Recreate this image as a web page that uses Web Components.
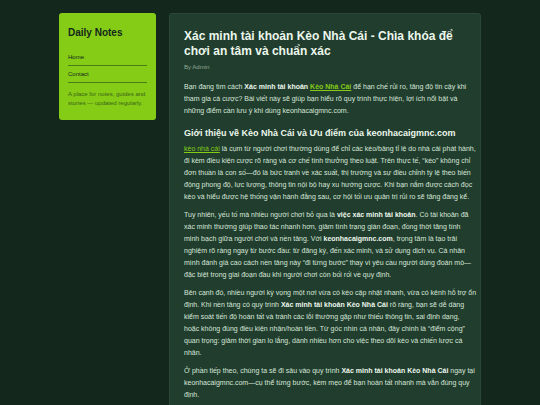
<!DOCTYPE html>
<html lang="vi">
<head>
<meta charset="utf-8">
<meta name="viewport" content="width=device-width, initial-scale=1">
<title>Daily Notes</title>
<style>
html { background: #14271d; }
body { margin: 0; font-family: "Liberation Sans", Arial, sans-serif; font-size: 7px; line-height: 12px; color: #d6e6d8; }
</style>
</head>
<body>
<notes-layout>
  <notes-sidebar slot="side" heading="Daily Notes">
    <nav-item href="#home">Home</nav-item>
    <nav-item href="#contact">Contact</nav-item>
    <span slot="about">A place for notes, guides and<br>stories — updated regularly.</span>
  </notes-sidebar>
  <notes-article>
    <span slot="title">Xác minh tài khoản Kèo Nhà Cái - Chìa khóa để<br>chơi an tâm và chuẩn xác</span>
    <span slot="author">By Admin</span>
    <article-text>Bạn đang tìm cách <b>Xác minh tài khoản <text-link href="#keo">Kèo Nhà Cái</text-link></b> để hạn chế rủi ro, tăng độ tin cậy khi<br>tham gia cá cược? Bài viết này sẽ giúp bạn hiểu rõ quy trình thực hiện, lợi ích nổi bật và<br>những điểm cần lưu ý khi dùng keonhacaigmnc.com.</article-text>
    <article-heading>Giới thiệu về Kèo Nhà Cái và Ưu điểm của keonhacaigmnc.com</article-heading>
    <article-text><text-link href="#keo">kèo nhà cái</text-link> là cụm từ người chơi thường dùng để chỉ các kèo/bảng tỉ lệ do nhà cái phát hành,<br>đi kèm điều kiện cược rõ ràng và cơ chế tính thưởng theo luật. Trên thực tế, “kèo” không chỉ<br>đơn thuần là con số—đó là bức tranh về xác suất, thị trường và sự điều chỉnh tỷ lệ theo biến<br>động phong độ, lực lượng, thông tin nội bộ hay xu hướng cược. Khi bạn nắm được cách đọc<br>kèo và hiểu được hệ thống vận hành đằng sau, cơ hội tối ưu quản trị rủi ro sẽ tăng đáng kể.</article-text>
    <article-text>Tuy nhiên, yếu tố mà nhiều người chơi bỏ qua là <b>việc xác minh tài khoản</b>. Có tài khoản đã<br>xác minh thường giúp thao tác nhanh hơn, giảm tình trạng gián đoạn, đồng thời tăng tính<br>minh bạch giữa người chơi và nền tảng. Với <b>keonhacaigmnc.com</b>, trọng tâm là tạo trải<br>nghiệm rõ ràng ngay từ bước đầu: từ đăng ký, đến xác minh, và sử dụng dịch vụ. Cá nhân<br>mình đánh giá cao cách nền tảng này “đi từng bước” thay vì yêu cầu người dùng đoán mò—<br>đặc biệt trong giai đoạn đầu khi người chơi còn bối rối về quy định.</article-text>
    <article-text>Bên cạnh đó, nhiều người kỳ vọng một nơi vừa có kèo cập nhật nhanh, vừa có kênh hỗ trợ ổn<br>định. Khi nền tảng có quy trình <b>Xác minh tài khoản Kèo Nhà Cái</b> rõ ràng, bạn sẽ dễ dàng<br>kiểm soát tiến độ hoàn tất và tránh các lỗi thường gặp như thiếu thông tin, sai định dạng,<br>hoặc không đúng điều kiện nhận/hoàn tiền. Từ góc nhìn cá nhân, đây chính là “điểm cộng”<br>quan trọng: giảm thời gian lo lắng, dành nhiều hơn cho việc theo dõi kèo và chiến lược cá<br>nhân.</article-text>
    <article-text>Ở phần tiếp theo, chúng ta sẽ đi sâu vào quy trình <b>Xác minh tài khoản Kèo Nhà Cái</b> ngay tại<br>keonhacaigmnc.com—cụ thể từng bước, kèm mẹo để bạn hoàn tất nhanh mà vẫn đúng quy<br>định.</article-text>
  </notes-article>
</notes-layout>
<script>
function define(name, html, setup) {
  const template = document.createElement('template');
  template.innerHTML = html;
  customElements.define(name, class extends HTMLElement {
    constructor() {
      super();
      this.attachShadow({ mode: 'open' }).append(template.content.cloneNode(true));
    }
    connectedCallback() { if (setup) setup(this, this.shadowRoot); }
  });
}

define('notes-layout', `
<style>
:host { display: grid; grid-template-columns: 97px minmax(0, 1fr); gap: 13px; align-items: start;
  max-width: 422px; margin: 0 auto; padding: 13px 16px 0; }
</style>
<slot name="side"></slot><slot></slot>`);

define('notes-sidebar', `
<style>
:host { display: block; background: #84cc16; color: #14271d; border-radius: 3px; padding: 13px 9px 12px; }
h2 { margin: 0 0 9px; font-size: 10px; line-height: 14px; }
nav { display: block; }
p { margin: 7px 0 0; font-size: 6px; line-height: 9px; color: #3c6419; }
</style>
<h2></h2><nav><slot></slot></nav><p><slot name="about"></slot></p>`,
(el, root) => { root.querySelector('h2').textContent = el.getAttribute('heading'); });

define('nav-item', `
<style>
:host { display: block; border-bottom: 1px solid #4c7d1a; padding: 3px 0 2px; }
a { display: block; color: inherit; text-decoration: none; font-size: 6px; line-height: 11px; }
</style>
<a><slot></slot></a>`,
(el, root) => { root.querySelector('a').href = el.getAttribute('href'); });

define('notes-article', `
<style>
:host { display: block; background: #213d2e; border: 1px solid #2a4636; border-radius: 3px; padding: 15px 3px 3px 14px; }
h1 { margin: 0; font-size: 12px; line-height: 15px; color: #ecf7ec; }
.by { margin: 3px 0 9px; font-size: 6px; line-height: 10px; color: #91a896; }
</style>
<h1><slot name="title"></slot></h1>
<p class="by"><slot name="author"></slot></p>
<slot></slot>`);

define('article-heading', `
<style>
:host { display: block; }
h2 { margin: 10px 0 4px; font-size: 9px; line-height: 12px; color: #ecf7ec; }
</style>
<h2><slot></slot></h2>`);

define('article-text', `
<style>
:host { display: block; }
p { margin: 0 0 6px; }
::slotted(b) { color: #ecf7ec; }
</style>
<p><slot></slot></p>`);

define('text-link', `
<style>
:host { display: inline; }
a { color: #84cc16; text-decoration: underline; }
</style>
<a><slot></slot></a>`,
(el, root) => { root.querySelector('a').href = el.getAttribute('href'); });
</script>
</body>
</html>
